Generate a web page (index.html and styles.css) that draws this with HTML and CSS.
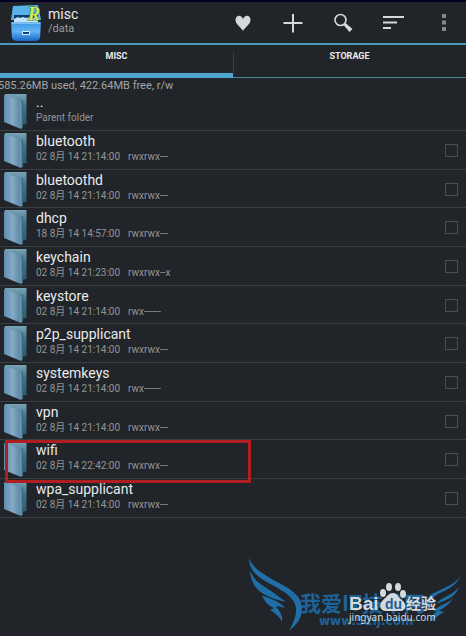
FILE: index.html
```html
<!DOCTYPE html>
<html lang="en">
<head>
  <meta charset="UTF-8">
  <meta name="viewport" content="width=device-width, initial-scale=1">
  <title>misc</title>
  <link rel="stylesheet" href="styles.css">
</head>
<body>

  <header class="topbar">
    <svg class="app-icon" viewBox="0 0 34 38" aria-hidden="true">
      <defs>
        <linearGradient id="cabinet" x1="0" y1="0" x2="0" y2="1">
          <stop offset="0" stop-color="#3f97e0"/>
          <stop offset="0.5" stop-color="#62b4f4"/>
          <stop offset="1" stop-color="#1764c8"/>
        </linearGradient>
      </defs>
      <path d="M4 2 L29 1 L32 16 L2 16 Z" fill="#58b4e8"/>
      <path d="M5 11 L29 11 L29 16 L5 16 Z" fill="#123c6c"/>
      <path d="M5 15 l4 -2 2 1 3 -1 3 1 4 -1 3 1 5 -1 v5 H5 Z" fill="#bde4f8"/>
      <path d="M2 18 H32 L31 34 Q30 37 26 37 H8 Q4 37 3 34 Z" fill="url(#cabinet)"/>
      <path d="M3 19 H31" stroke="#b8e0fa" stroke-width="1"/>
      <rect x="13" y="27" width="8" height="4" rx="1" fill="#d9f0ff"/>
      <rect x="14" y="28" width="6" height="2" fill="#0e3f86"/>
      <text class="app-letter" x="19" y="16">R</text>
    </svg>
    <div class="title">
      <h1>misc</h1>
      <p>/data</p>
    </div>
    <nav class="actions">
      <button type="button" aria-label="Bookmarks">
        <svg viewBox="0 0 24 24"><path d="M12 20 C10 16 4 13 4.500 8.500 C5 4 10 3.500 12 8 C14 3.500 19 4 19.500 8.500 C20 13 14 16 12 20 Z"/></svg>
      </button>
      <button type="button" aria-label="New">
        <svg viewBox="0 0 24 24"><path d="M11 3 h2 v8 h8.500 v2 h-8.500 v8.500 h-2 v-8.500 h-8.500 v-2 h8.500 Z"/></svg>
      </button>
      <button type="button" aria-label="Search">
        <svg viewBox="0 0 24 24"><circle cx="9.500" cy="9" r="5.500" fill="none" stroke="#d6d8da" stroke-width="1.600"/><path d="M12.500 14 L14.500 12 L21.500 18 L18.500 21 Z"/></svg>
      </button>
      <button type="button" aria-label="Sort">
        <svg viewBox="0 0 24 24"><path d="M2 5 h21 v2 H2 Z M2 10.500 h14 v2 H2 Z M2 16 h8 v2 H2 Z"/></svg>
      </button>
      <button type="button" class="more" aria-label="More options">
        <svg viewBox="0 0 24 24"><path d="M10 3 h4 v4 h-4 Z M10 9.500 h4 v4 h-4 Z M10 16 h4 v4 h-4 Z"/></svg>
      </button>
    </nav>
  </header>

  <nav class="tabs">
    <a href="#misc" class="tab active">MISC</a>
    <a href="#storage" class="tab">STORAGE</a>
  </nav>

  <main>
    <p class="usage">585.26MB used, 422.64MB free, r/w</p>

    <!-- folder shape shared by every row -->
    <svg class="symbols" aria-hidden="true">
      <defs>
        <linearGradient id="front" x1="0" y1="0" x2="1" y2="0">
          <stop offset="0" stop-color="#5f8eb0"/>
          <stop offset="0.5" stop-color="#86abc6"/>
          <stop offset="1" stop-color="#5585a4"/>
        </linearGradient>
        <linearGradient id="back" x1="0" y1="0" x2="0" y2="1">
          <stop offset="0" stop-color="#7aa4b6"/>
          <stop offset="0.4" stop-color="#3f7585"/>
          <stop offset="1" stop-color="#2c5a68"/>
        </linearGradient>
        <symbol id="folder" viewBox="0 0 23 36">
          <path d="M1 0 H22.500 V30 L17 31 L1 28 Z" fill="url(#back)"/>
          <path d="M0 1 L15 6 L17 8 V35 L0 28 Z" fill="url(#front)"/>
          <path d="M17 8 L19 6 V34 L17 35 Z" fill="#3b6a80"/>
          <path d="M17 8 V34" stroke="#a5c3d2" stroke-width="0.600"/>
        </symbol>
      </defs>
    </svg>

    <ul class="files">
      <li>
        <svg class="folder"><use href="#folder"/></svg>
        <div class="info">
          <h2>..</h2>
          <p><span>Parent folder</span></p>
        </div>
      </li>
      <li>
        <svg class="folder"><use href="#folder"/></svg>
        <div class="info">
          <h2>bluetooth</h2>
          <p><span>02 8月 14 21:14:00</span><span>rwxrwx---</span></p>
        </div>
        <input type="checkbox" aria-label="bluetooth">
      </li>
      <li>
        <svg class="folder"><use href="#folder"/></svg>
        <div class="info">
          <h2>bluetoothd</h2>
          <p><span>02 8月 14 21:14:00</span><span>rwxrwx---</span></p>
        </div>
        <input type="checkbox" aria-label="bluetoothd">
      </li>
      <li>
        <svg class="folder"><use href="#folder"/></svg>
        <div class="info">
          <h2>dhcp</h2>
          <p><span>18 8月 14 14:57:00</span><span>rwxrwx---</span></p>
        </div>
        <input type="checkbox" aria-label="dhcp">
      </li>
      <li>
        <svg class="folder"><use href="#folder"/></svg>
        <div class="info">
          <h2>keychain</h2>
          <p><span>02 8月 14 21:23:00</span><span>rwxrwx--x</span></p>
        </div>
        <input type="checkbox" aria-label="keychain">
      </li>
      <li>
        <svg class="folder"><use href="#folder"/></svg>
        <div class="info">
          <h2>keystore</h2>
          <p><span>02 8月 14 21:14:00</span><span>rwx------</span></p>
        </div>
        <input type="checkbox" aria-label="keystore">
      </li>
      <li>
        <svg class="folder"><use href="#folder"/></svg>
        <div class="info">
          <h2>p2p_supplicant</h2>
          <p><span>02 8月 14 21:14:00</span><span>rwxrwx---</span></p>
        </div>
        <input type="checkbox" aria-label="p2p_supplicant">
      </li>
      <li>
        <svg class="folder"><use href="#folder"/></svg>
        <div class="info">
          <h2>systemkeys</h2>
          <p><span>02 8月 14 21:14:00</span><span>rwx------</span></p>
        </div>
        <input type="checkbox" aria-label="systemkeys">
      </li>
      <li>
        <svg class="folder"><use href="#folder"/></svg>
        <div class="info">
          <h2>vpn</h2>
          <p><span>02 8月 14 21:14:00</span><span>rwxrwx---</span></p>
        </div>
        <input type="checkbox" aria-label="vpn">
      </li>
      <li class="marked">
        <svg class="folder"><use href="#folder"/></svg>
        <div class="info">
          <h2>wifi</h2>
          <p><span>02 8月 14 22:42:00</span><span>rwxrwx---</span></p>
        </div>
        <input type="checkbox" aria-label="wifi">
      </li>
      <li>
        <svg class="folder"><use href="#folder"/></svg>
        <div class="info">
          <h2>wpa_supplicant</h2>
          <p><span>02 8月 14 21:14:00</span><span>rwxrwx---</span></p>
        </div>
        <input type="checkbox" aria-label="wpa_supplicant">
      </li>
    </ul>
  </main>

  <!-- watermarks in the bottom right corner -->
  <svg class="watermark" viewBox="0 0 231 91" aria-hidden="true">
    <g fill="#1f6ea8">
      <path d="M14 13 C17 23 30 30 44 38 C58 45 67 52 67 64 C67 74 61 80 54 86 C59 76 64 66 59 57 C53 47 42 43 30 36 C20 30 14 23 14 13 Z"/>
      <path d="M15 25 C19 37 28 40 39 48 C45 53 49 55 51 57 C43 55 35 53 27 48 C19 43 15 34 15 25 Z"/>
      <path d="M27 50 C34 54 44 55 50 63 C46 62 43 61 41 62 C45 66 48 71 47 77 C44 70 38 67 35 65 C37 64 38 64 39 63 C33 61 29 56 27 50 Z"/>
      <path d="M226 31 C220 42 211 45 203 49 C197 53 193 58 192 64 C189 56 193 50 201 47 C211 42 220 39 226 31 Z"/>
      <path d="M224 42 C220 53 211 55 201 59 C206 52 217 51 224 42 Z"/>
      <path d="M218 53 C213 62 207 63 204 66 C206 66 208 67 209 67 C204 70 199 73 197 77 C195 72 199 69 202 66 C200 66 199 66 198 67 C203 59 212 60 218 53 Z"/>
    </g>
    <g class="mark-blue">
      <text class="mark-cn" x="65" y="66">我爱IT技术网</text>
      <text class="mark-url" x="84" y="80">www.52ij.com</text>
    </g>
    <g class="mark-white">
      <text class="baidu" x="114" y="65">Bai</text>
      <g>
        <ellipse cx="148" cy="48" rx="3" ry="4"/>
        <ellipse cx="154" cy="42" rx="3" ry="4"/>
        <ellipse cx="163" cy="42" rx="3" ry="4"/>
        <ellipse cx="168" cy="49" rx="3" ry="4"/>
        <path d="M158 48 C153 48 152 52 148 55 C143 60 145 66 151 66 H165 C171 66 172 60 168 56 C163 53 163 48 158 48 Z"/>
      </g>
      <text class="du" x="150" y="64">du</text>
      <text class="jingyan" x="171" y="64">经验</text>
      <text class="baidu-url" x="114" y="76">jingyan.baidu.com</text>
    </g>
  </svg>

</body>
</html>
```
FILE: styles.css
```css
*,
*::after {
  box-sizing: border-box;
}

body {
  margin: 0;
  min-height: 100vh;
  position: relative;
  overflow-x: hidden;
  background: #212529;
  color: #e8eaec;
  font-family: Roboto, "Noto Sans CJK SC", sans-serif;
}

h1, h2, p, ul {
  margin: 0;
  padding: 0;
  font-weight: normal;
}

.topbar {
  display: flex;
  align-items: center;
  height: 45px;
  padding-left: 9px;
  border-top: 2px solid #000022;
  border-bottom: 2px solid #4a9ab8;
}

.app-icon {
  width: 34px;
  height: 38px;
}

.app-letter {
  font: italic bold 18px "Liberation Serif", serif;
  fill: #d2ec5c;
  stroke: #4a7a2a;
  stroke-width: 1px;
  paint-order: stroke;
}

.title {
  margin: 0 0 3px 5px;
}

.title h1 {
  font-size: 14px;
  line-height: 16px;
}

.title p {
  font-size: 11px;
  line-height: 14px;
  color: #9a9da0;
}

.actions {
  display: flex;
  margin-left: auto;
}

.actions button {
  width: 50px;
  height: 40px;
  padding: 0;
  border: none;
  background: transparent;
  cursor: pointer;
}

.actions svg {
  display: block;
  width: 24px;
  height: 24px;
  margin: auto;
  fill: #d6d8da;
}

.actions .more {
  width: 44px;
  margin-left: 4px;
}

.actions .more svg {
  fill: #85888b;
}

.tabs {
  display: flex;
  height: 33px;
  border-bottom: 1px solid #4a8a9c;
}

.tab {
  flex: 1;
  height: 33px;
  padding-top: 4px;
  color: #e8eaec;
  font-size: 9px;
  font-weight: bold;
  line-height: 14px;
  text-align: center;
  text-decoration: none;
  background: linear-gradient(#3c4043, #3c4043) left 7px / 1px 21px no-repeat;
}

.tab.active {
  border-bottom: 5px solid #4ea6cf;
  background: none;
}

.usage {
  height: 14px;
  margin-left: -2px;
  color: #a2a5a8;
  font-size: 11px;
  line-height: 16px;
  white-space: nowrap;
}

.symbols {
  position: absolute;
  width: 0;
  height: 0;
}

.files {
  list-style: none;
}

.files li {
  display: flex;
  align-items: flex-start;
  position: relative;
  height: 39px;
  padding: 2px 8px 0 4px;
  border-bottom: 1px solid #3a3e42;
}

.files li:nth-child(3n) {
  height: 38px;
}

.folder {
  width: 23px;
  height: 36px;
}

.info {
  flex: 1;
  margin-left: 9px;
}

.info h2 {
  font-size: 14px;
  line-height: 17px;
}

.info p {
  display: flex;
  gap: 8px;
  color: #929598;
  font-size: 10px;
  line-height: 14px;
}

.files input {
  appearance: none;
  width: 13px;
  height: 13px;
  margin: 11px 0 0;
  border: 1px solid #4a4e52;
}

.marked::after {
  content: "";
  position: absolute;
  top: 0;
  left: 5px;
  width: 246px;
  height: 43px;
  border: 3px solid #b01e22;
  z-index: 1;
}

.watermark {
  position: absolute;
  right: 0;
  bottom: 0;
  width: 231px;
  height: 91px;
}

.mark-blue {
  fill: #1d639a;
}

.mark-cn {
  font: bold 21px "Noto Sans CJK SC", sans-serif;
}

.mark-url {
  font: bold 12px "DejaVu Sans", sans-serif;
}

.mark-white {
  fill: #d4d9de;
}

.baidu {
  font: bold 19px "Liberation Sans", sans-serif;
}

.mark-white .du {
  font: bold 14px "Liberation Sans", sans-serif;
  fill: #1d5f94;
}

.jingyan {
  font: bold 15px "Noto Sans CJK SC", sans-serif;
}

.baidu-url {
  font: 10px "Noto Sans", sans-serif;
}
```
